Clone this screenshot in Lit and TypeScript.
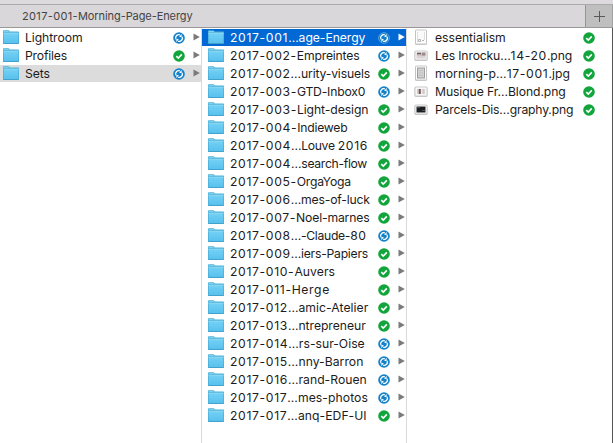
import { LitElement, html, svg, css, nothing } from "lit";
import { customElement, property } from "lit/decorators.js";
import { classMap } from "lit/directives/class-map.js";

type Status = "ok" | "sync";
type Kind = "folder" | "doc" | "news" | "photo" | "music" | "dark";

interface Entry {
  name: string;
  width: number;
  status: Status;
  kind: Kind;
  state?: "selected" | "path";
}

const folder = (name: string, width: number, status: Status, state?: Entry["state"]): Entry => ({ name, width, status, kind: "folder", state });
const file = (name: string, width: number, kind: Kind): Entry => ({ name, width, status: "ok", kind });

const ROOT: Entry[] = [
  folder("Lightroom", 56.5, "sync"),
  folder("Profiles", 41, "ok"),
  folder("Sets", 24, "sync", "path"),
];

const SETS: Entry[] = [
  folder("2017-001…age-Energy", 134.4, "sync", "selected"),
  folder("2017-002-Empreintes", 128.4, "sync"),
  folder("2017-002…urity-visuels", 139, "ok"),
  folder("2017-003-GTD-Inbox0", 135, "sync"),
  folder("2017-003-Light-design", 137.4, "ok"),
  folder("2017-004-Indieweb", 116.4, "ok"),
  folder("2017-004…Louve 2016", 137, "ok"),
  folder("2017-004…search-flow", 136, "ok"),
  folder("2017-005-OrgaYoga", 119.7, "ok"),
  folder("2017-006…mes-of-luck", 138.7, "ok"),
  folder("2017-007-Noel-marnes", 138.4, "ok"),
  folder("2017-008…-Claude-80", 135.7, "sync"),
  folder("2017-009…iers-Papiers", 137, "ok"),
  folder("2017-010-Auvers", 104, "ok"),
  folder("2017-011-Herge", 99, "ok"),
  folder("2017-012…amic-Atelier", 137.4, "ok"),
  folder("2017-013…ntrepreneur", 134.7, "ok"),
  folder("2017-014…rs-sur-Oise", 133.7, "sync"),
  folder("2017-015…nny-Barron", 132.4, "sync"),
  folder("2017-016…rand-Rouen", 135.7, "sync"),
  folder("2017-017…mes-photos", 137, "sync"),
  folder("2017-017…anq-EDF-UI", 135.7, "ok"),
];

const FILES: Entry[] = [
  file("essentialism", 69.7, "doc"),
  file("Les Inrocku…14-20.png", 136, "news"),
  file("morning-p…17-001.jpg", 134, "photo"),
  file("Musique Fr…Blond.png", 129.7, "music"),
  file("Parcels-Dis…graphy.png", 137.3, "dark"),
];

const frame = (x: number, y: number, w: number, h: number, fill: string) => svg`
  <rect x=${x} y=${y + 0.6} width=${w} height=${h} rx="1" fill="#000" opacity=".18"></rect>
  <rect x=${x + 0.5} y=${y + 0.5} width=${w - 1} height=${h - 1} rx="1" fill="#fff" stroke="#b9b9b9" stroke-width=".8"></rect>
  <rect x=${x + 2} y=${y + 2} width=${w - 4} height=${h - 4} fill=${fill}></rect>`;

const PICTURES = {
  folder: svg`
    <path d="M0 3.2V2Q0 1.2 .8 1.2H5.6L6.9 2.5H15.2Q16 2.5 16 3.3V5H0Z" fill="#48b0d8"></path>
    <path d="M.7 2H5.3L6.3 3.1H.7Z" fill="#7fd2ef"></path>
    <rect x="0" y="3.4" width="16" height="11.5" rx=".6" fill="#3f9fc8"></rect>
    <rect x=".5" y="4" width="15" height="10.1" fill="url(#face)"></rect>
    <rect x=".3" y="3.6" width="15.4" height=".9" fill="#95dcf5"></rect>`,
  doc: svg`${frame(2, 0.5, 12, 15, "#fafafa")}
    <path d="M4.5 3V13M11.5 3V11" stroke="#dedede" fill="none"></path>
    <path d="M5.5 10.5H7.5V12.5H5.5ZM9 11.5H11" stroke="#b4b4b4" fill="none"></path>`,
  news: svg`${frame(1.5, 3.5, 13, 10, "#cfc4c4")}
    <path d="M4 6.5H8" stroke="#6b6262" stroke-width="1.6"></path>
    <path d="M9 7H12.5" stroke="#a28a8e" stroke-width="3"></path>
    <path d="M4 10H12" stroke="#dcd4d4" stroke-width="2"></path>`,
  photo: svg`${frame(2, 0.5, 12, 15, "#9a9c9d")}
    <rect x="5" y="3.5" width="6" height="9" fill="#d2d2d2"></rect>
    <path d="M6 5.5H10M6 8H10M6 10.5H10" stroke="#bcbcbc" stroke-width=".8"></path>`,
  music: svg`${frame(1.5, 3.5, 13, 10, "#eee")}
    <path d="M5 6V11" stroke="#aaa" stroke-width="1"></path>
    <path d="M6.8 6V11" stroke="#83534f" stroke-width="2"></path>
    <path d="M10.5 6V11" stroke="#ccc" stroke-width="2.5"></path>`,
  dark: svg`${frame(1.5, 3.5, 13, 10, "#1d2022")}
    <path d="M4 6.5H7M9 9.5H12" stroke="#4b5053"></path>`,
};

@customElement("entry-icon")
class EntryIcon extends LitElement {
  @property() kind: Kind = "folder";
  static styles = css`
    :host { display: block; width: 16px; height: 17px; }
    svg { display: block; }
  `;
  render() {
    return html`<svg width="16" height="17" viewBox="0 0 16 17">
      <defs><linearGradient id="face" x1="0" y1="0" x2="0" y2="1">
        <stop offset="0" stop-color="#74d1f5"></stop><stop offset="1" stop-color="#58c1ee"></stop>
      </linearGradient></defs>
      ${PICTURES[this.kind]}
    </svg>`;
  }
}

@customElement("sync-badge")
class SyncBadge extends LitElement {
  @property() status: Status = "ok";
  @property({ type: Boolean }) ringed = false;
  static styles = css`
    :host { display: block; width: 12px; height: 12px; margin-top: 1px; }
    svg { display: block; }
  `;
  render() {
    return html`<svg width="12" height="12" viewBox="0 0 12 12">
      ${this.status === "ok"
        ? svg`<circle cx="6" cy="6" r="5.8" fill="#12a53c"></circle>
            <path d="M3.3 6.1L5.3 8.1L8.8 4.4" fill="none" stroke="#fff" stroke-width="1.6"></path>`
        : svg`<circle cx="6" cy="6" r="5.8" fill="#1482cb"></circle>
            ${this.ringed ? svg`<circle cx="6" cy="6" r="5.4" fill="none" stroke="#75b2e2" stroke-width=".6"></circle>` : nothing}
            <path d="M2.9 7.3A3.2 3.2 0 0 1 6.9 2.9M9.1 4.7A3.2 3.2 0 0 1 5.1 9.1" fill="none" stroke="#fff" stroke-width="1.3"></path>
            <path d="M6.2 5H8.6V1.7ZM5.8 7H3.4V10.3Z" fill="#fff"></path>`}
    </svg>`;
  }
}

/** A one-line label whose letters are tracked so that the line fills a given width. */
@customElement("fitted-label")
class FittedLabel extends LitElement {
  @property() text = "";
  @property({ type: Number }) width = 0;
  @property({ type: Number }) digits = 0.65;
  static styles = css`
    :host { display: block; white-space: nowrap; }
    .number { letter-spacing: var(--digits); }
    .word { letter-spacing: var(--word, 0px); }
  `;
  private get parts() {
    return this.text.split(/(\d[\d-]*)/).filter(Boolean);
  }
  updated() {
    const line = this.renderRoot.querySelector<HTMLElement>(".line")!;
    line.style.setProperty("--word", "0px");
    const letters = this.parts.filter((p) => !/^\d/.test(p)).join("").length;
    const slack = this.width + 1 - line.getBoundingClientRect().width;
    line.style.setProperty("--word", `${slack / letters}px`);
  }
  render() {
    return html`<span class="line" style="--digits:${this.digits}px">${this.parts.map(
      (p) => html`<span class=${/^\d/.test(p) ? "number" : "word"}>${p}</span>`
    )}</span>`;
  }
}

@customElement("browser-column")
class BrowserColumn extends LitElement {
  @property({ attribute: false }) entries: Entry[] = [];
  static styles = css`
    :host { display: flex; flex-direction: column; gap: 1px; padding-top: 1px; box-sizing: border-box; min-width: 0; }
    .row { display: flex; align-items: center; height: 17px; padding-left: var(--inset, 6px); color: #1c1c1c; }
    .path { background: #dcdcdc; }
    .selected { background: #0268d3; color: #fff; }
    .name { flex: 1; min-width: 0; margin-left: 6px; font-size: 12.2px; line-height: 18px; }
    .arrow { flex: none; width: 7px; height: 8px; margin: 0 1px 1px 8px; fill: #7a7a7a; }
    .selected .arrow { fill: #fff; }
    .leaf { width: 17px; }
  `;
  render() {
    return this.entries.map((e) => html`
      <div class=${classMap({ row: true, selected: e.state === "selected", path: e.state === "path" })}>
        <entry-icon .kind=${e.kind}></entry-icon>
        <fitted-label class="name" .text=${e.name} .width=${e.width}></fitted-label>
        <sync-badge .status=${e.status} .ringed=${e.state === "selected"}></sync-badge>
        ${e.kind === "folder"
          ? html`<svg class="arrow" viewBox="0 0 7 8"><path d="M.5 .5V7.5L6.8 4Z"></path></svg>`
          : html`<span class="leaf"></span>`}
      </div>`);
  }
}

@customElement("app-root")
class AppRoot extends LitElement {
  static styles = css`
    :host { display: flex; flex-direction: column; width: 613px; height: 443px; overflow: hidden; background: #fff; font-family: Inter, "Liberation Sans", sans-serif; }
    .toolbar { height: 4px; background: #dcdadc; border-bottom: 1px solid #acabac; }
    .tabs { display: flex; height: 22px; border-bottom: 1px solid #989898; background: #d9d7d9; }
    .tab { flex: 1; padding-left: 22px; font-size: 11px; line-height: 23px; color: #454445; }
    .add { box-sizing: border-box; width: 28px; padding: 6px 0 0 8px; border-left: 1px solid #969596; border-right: 1px solid #a2a1a2; background: #c0bfc0; }
    .add svg { display: block; }
    .body { flex: 1; display: grid; grid-template-columns: 201px 204px 1fr; column-gap: 1px; background: #dadada; }
    browser-column { background: #fff; --inset: 3px; }
    .sets { --inset: 6px; }
    .files { --inset: 6px; border-right: 1px solid #555; }
  `;
  render() {
    return html`
      <div class="toolbar"></div>
      <div class="tabs">
        <fitted-label class="tab" .text=${"2017-001-Morning-Page-Energy"} .width=${169.6} .digits=${0.35}></fitted-label>
        <div class="add"><svg width="11" height="11" viewBox="0 0 11 11"><path d="M5.5 0V11M0 5.5H11" stroke="#5a595a" stroke-width="1"></path></svg></div>
      </div>
      <div class="body">
        <browser-column .entries=${ROOT}></browser-column>
        <browser-column class="sets" .entries=${SETS}></browser-column>
        <browser-column class="files" .entries=${FILES}></browser-column>
      </div>`;
  }
}
